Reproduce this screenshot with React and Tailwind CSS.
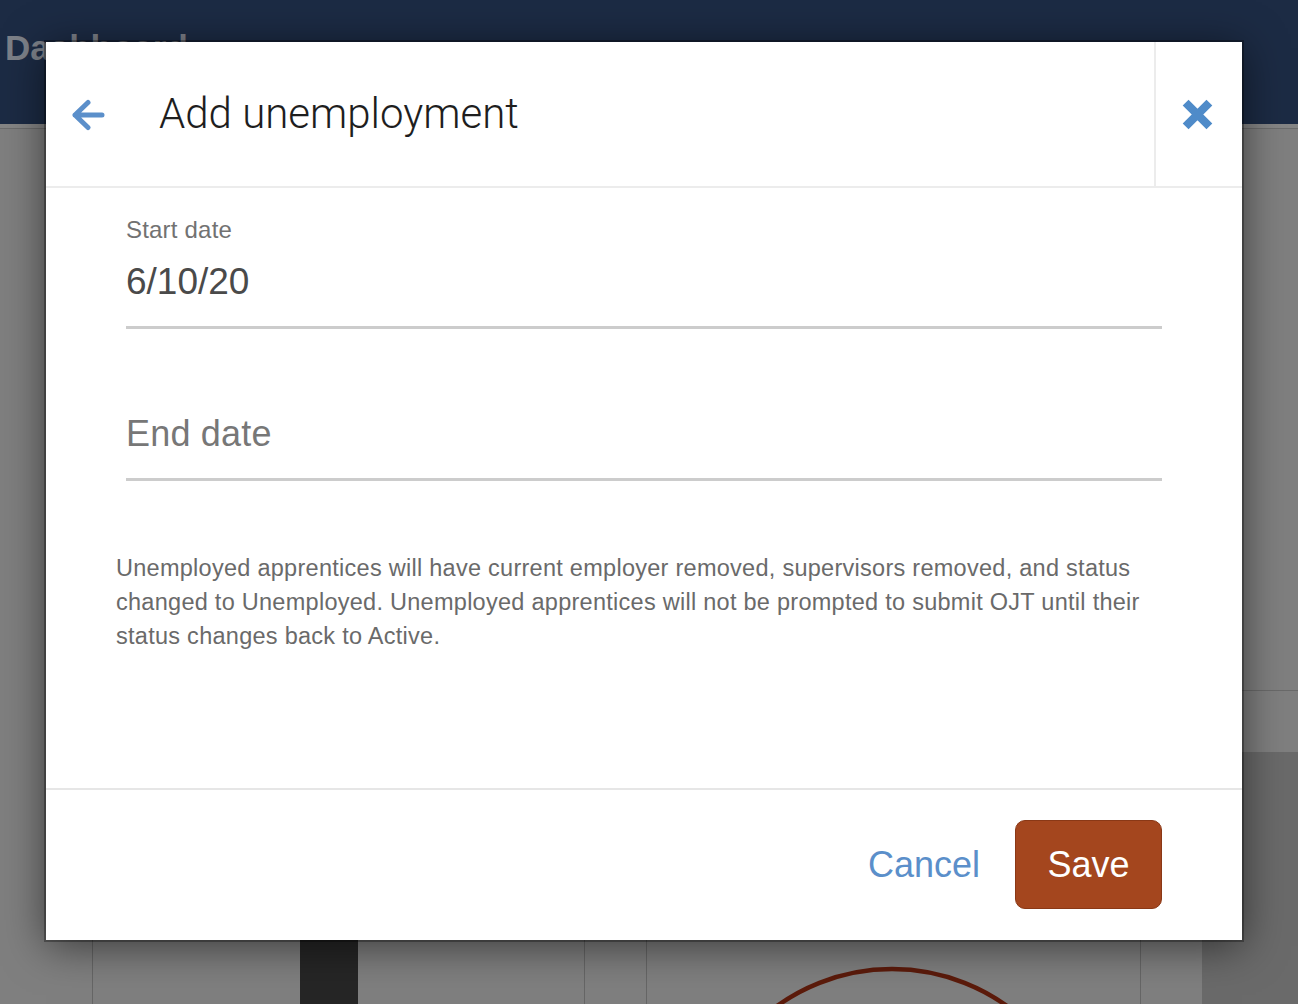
import React from "react";

function BackArrow() {
  return (
    <svg width="34" height="32" viewBox="0 0 34 32" fill="none">
      <path d="M4 16 H31 M17 3.5 L4 16 L17 28.5" stroke="#5b8fca" strokeWidth="5" strokeLinecap="round" strokeLinejoin="round" />
    </svg>
  );
}

function CloseX() {
  return (
    <svg width="31" height="31" viewBox="0 0 30 30" fill="none">
      <path d="M3.5 3.5 L26.5 26.5 M26.5 3.5 L3.5 26.5" stroke="#4f8bc9" strokeWidth="8" strokeLinecap="butt" />
    </svg>
  );
}

export default function App() {
  return (
    <div className="relative w-[1298px] h-[1004px] overflow-hidden bg-[#7f7f7f] font-['Liberation_Sans',Arial,sans-serif]">
      {/* Background page (dimmed) */}
      <div className="flex flex-col h-full">
        <div className="h-[124px] bg-[#1c2b44] pl-[5px] pt-[26px]">
          <span className="text-[35px] font-bold leading-[44px] text-[#7c8088]">Dashboard</span>
        </div>
        <div className="h-[5px] bg-[#858585] border-b border-[#6c6c6c]" />
        <div className="flex flex-1">
          <div className="w-[1202px] flex flex-col">
            <div className="h-[623px]" />
            <div className="flex flex-1">
              <div className="w-[93px] border-r border-[#666]" />
              <div className="w-[207px]" />
              <div className="w-[58px] bg-[#262626]" />
              <div className="w-[227px] border-r border-[#666]" />
              <div className="w-[62px] border-r border-[#666]" />
              <div className="relative w-[494px] border-r border-[#666]">
                <svg className="absolute left-0 top-0" width="494" height="260" viewBox="0 0 494 260">
                  <circle cx="245" cy="414" r="197" stroke="#5c1b0b" strokeWidth="4.5" fill="none" />
                </svg>
              </div>
              <div className="flex-1" />
            </div>
          </div>
          <div className="flex-1 flex flex-col">
            <div className="h-[561px]" />
            <div className="h-[62px] border-t border-[#6a6a6a]" />
            <div className="flex-1 bg-[#6a6a6a]" />
          </div>
        </div>
      </div>

      {/* Modal */}
      <div className="absolute left-[46px] top-[42px] w-[1196px] h-[898px] flex flex-col bg-white shadow-[0_0_0_2px_rgba(0,0,0,0.3),0_6px_40px_rgba(0,0,0,0.55)]">
        <div className="h-[146px] flex border-b-2 border-[#ececec]">
          <div className="flex-1 flex items-center">
            <div className="w-[114px] pl-[25px] pt-[1px] flex items-center">
              <BackArrow />
            </div>
            <h1 className="font-['Roboto',sans-serif] font-light text-[42px] leading-[48px] text-[#1e1e1e] -ml-[1px]">
              Add unemployment
            </h1>
          </div>
          <div className="w-[88px] border-l-2 border-[#ececec] flex items-center justify-center pr-[3px]">
            <CloseX />
          </div>
        </div>

        <div className="flex-1 px-[70px]">
          <div className="mx-[10px]">
            <div className="pt-[28px] text-[24px] leading-[28px] text-[#727272] tracking-[0.2px]">Start date</div>
            <div className="mt-[18px] pb-[24px] border-b-[3px] border-[#cccccc] text-[37px] leading-[40px] text-[#4a4a4a]">
              6/10/20
            </div>
            <div className="mt-[85px] pb-[24px] border-b-[3px] border-[#cccccc] text-[36px] leading-[40px] text-[#777777] tracking-[0.2px]">
              End date
            </div>
          </div>
          <p className="mt-[70px] text-[23.5px] leading-[34px] text-[#6a6a6a] tracking-[0.27px] max-w-[1045px]">
            Unemployed apprentices will have current employer removed, supervisors removed, and status changed to Unemployed. Unemployed apprentices will not be prompted to submit OJT until their status changes back to Active.
          </p>
        </div>

        <div className="h-[152px] border-t-2 border-[#e6e6e6] flex items-start justify-end gap-[35px] pt-[30px] pr-[80px]">
          <button className="h-[89px] flex items-center text-[36px] text-[#5b8fca]">Cancel</button>
          <button className="h-[89px] w-[147px] rounded-[10px] bg-[#a4461e] border border-[#8a3816] text-[36px] text-white flex items-center justify-center">
            Save
          </button>
        </div>
      </div>
    </div>
  );
}
